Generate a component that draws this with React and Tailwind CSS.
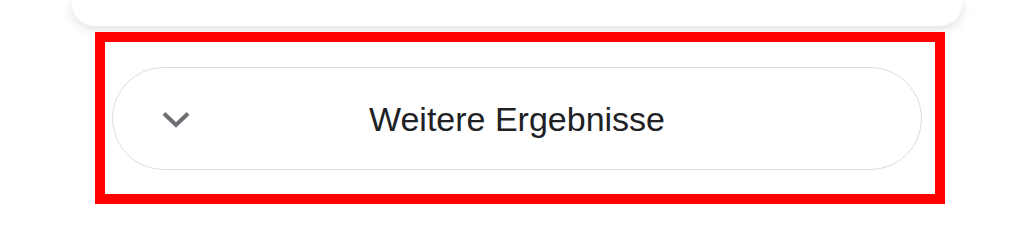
import React from "react";

const Chevron = () => (
  <svg width="30" height="20" viewBox="0 0 30 20" fill="none">
    <path
      d="M3 4.5 L15 16 L27 4.5"
      stroke="#6b6f74"
      strokeWidth="4"
      strokeLinejoin="miter"
    />
  </svg>
);

const App = () => {
  return (
    <div className="w-[1024px] h-[242px] bg-white overflow-hidden font-['Liberation_Sans',Arial,sans-serif]">
      {/* card above, cut off by the top edge */}
      <div className="ml-[72px] w-[890px] h-[26px] bg-white rounded-b-[22px] shadow-[0_3px_12px_rgba(0,0,0,0.13)]" />

      {/* highlight frame */}
      <div className="mt-[6px] ml-[95px] w-[850px] h-[172px] border-[10px] border-[#ff0000] pt-[25px] pl-[7px]">
        <button className="w-[810px] h-[103px] rounded-full border-[1.5px] border-[#dcdcdc] bg-white flex items-center">
          <div className="pl-[48px] w-[78px] flex items-center">
            <Chevron />
          </div>
          <span className="flex-1 text-center text-[34px] leading-none text-[#202124]">
            Weitere Ergebnisse
          </span>
          <div className="w-[78px]" />
        </button>
      </div>
    </div>
  );
};

export default App;
